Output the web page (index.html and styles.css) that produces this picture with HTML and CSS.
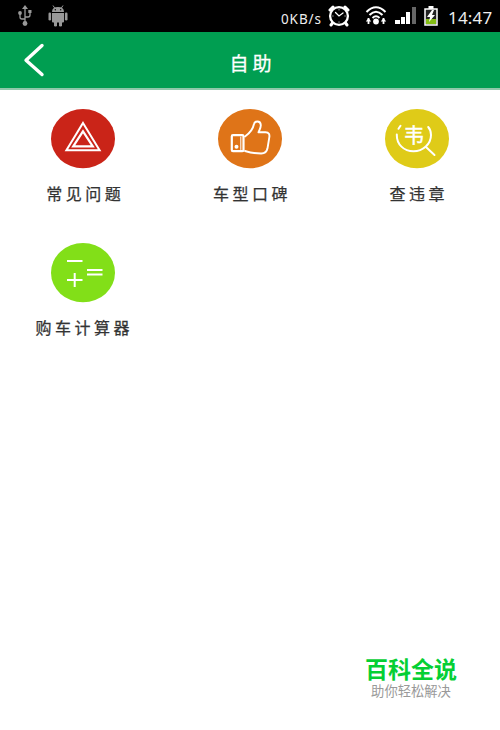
FILE: index.html
```html
<!DOCTYPE html>
<html lang="zh-CN">
<head>
<meta charset="utf-8">
<title>自助</title>
<link rel="stylesheet" href="styles.css">
</head>
<body>
<div class="screen">
  <div class="status">
    <svg class="usb" width="14" height="22" viewBox="0 0 14 22" fill="none" stroke="#999" stroke-width="1.300">
      <path d="M7 3V18M2 8v4q0 2 2 2h3M12 6.500v3.500q0 2-2 2H7"/>
      <g fill="#999" stroke="none"><path d="M7 0l3 4H4z"/><circle cx="7" cy="18.500" r="2.400"/><circle cx="2" cy="8" r="1.900"/><path d="M10.300 5h3.200v3h-3.200z"/></g>
    </svg>
    <svg class="robot" width="20" height="22" viewBox="0 0 20 22" fill="#999">
      <path d="M4 7q0-5 6-5t6 5zM4 8h12v8.500q0 1-1 1H5q-1 0-1-1z"/>
      <rect x="0.500" y="7.500" width="2.600" height="8" rx="1.300"/><rect x="16.900" y="7.500" width="2.600" height="8" rx="1.300"/>
      <rect x="6" y="15" width="3" height="6.500" rx="1.300"/><rect x="11" y="15" width="3" height="6.500" rx="1.300"/>
      <path d="M5 .5l2 3M15 .5l-2 3" stroke="#999"/><circle cx="7.300" cy="4.800" r=".7" fill="#000"/><circle cx="12.700" cy="4.800" r=".7" fill="#000"/>
    </svg>
    <span class="speed">0KB/s</span>
    <svg class="alarm" width="22" height="22" viewBox="0 0 22 22" fill="none" stroke="#fff" stroke-linecap="round">
      <path d="M2 5l3-3M20 5l-3-3M4.500 18L3 20M17.500 18l1.500 2" stroke-width="3"/>
      <circle cx="11" cy="11" r="8.900" fill="#000" stroke-width="2.300"/>
      <path d="M7.500 7.500L11 11l4-3" stroke-width="1.300"/>
      <path d="M11 4.800v.1M17 11h.1M11 17v.1M5 11h-.1" stroke-width="1"/>
    </svg>
    <svg class="wifi" width="22" height="20" viewBox="0 0 22 20" fill="none" stroke="#fff" stroke-width="2">
      <path d="M1.500 6Q11-3.500 20.500 6M4.500 9Q11 2.500 17.500 9M7.500 12Q11 8.500 14.500 12"/>
      <circle cx="11" cy="15.500" r="2.900" fill="#fff" stroke="none"/>
      <path d="M3.500 12v6M18.500 12v6" stroke-width="1.800"/><path d="M.8 15.500h5.400l-2.700-3.500zM15.800 15.500h5.400l-2.700-3.500z" fill="#fff" stroke="none"/>
    </svg>
    <svg class="signal" width="22" height="18" viewBox="0 0 22 18" fill="#fff">
      <path d="M0 13h5v4H0zM6 10h4v7H6zM11 5h4v12h-4z"/><path d="M17 0h4v17h-4z" fill="#666"/>
    </svg>
    <svg class="battery" width="14" height="20" viewBox="0 0 14 20">
      <path d="M4.500 0h5v3h-5z" fill="#fff"/><path d="M1 3h12v16H1z" fill="#222" stroke="#fff" stroke-width="1.500"/>
      <path d="M2 13h10v5H2z" fill="#83bd14"/><path d="M8 4l-5 7h3l-1 5 6-7H8l2-5z" fill="#fff"/>
    </svg>
    <span class="clock">14:47</span>
  </div>
  <header class="bar">
    <svg class="back" width="22" height="34" viewBox="0 0 22 34" fill="none" stroke="#fff" stroke-width="3.400" stroke-linecap="round" stroke-linejoin="round"><path d="M19 2.500L3 17.200 19 31.500"/></svg>
    <h1 class="title">自助</h1>
  </header>
  <main class="grid">
    <div class="item">
      <svg width="64" height="60" viewBox="0 0 64 60" fill="none" stroke="#fff" stroke-linejoin="miter">
        <ellipse cx="32" cy="29.700" rx="32" ry="29.600" fill="#ca2418" stroke="none"/>
        <path d="M32 14L48.600 41.200H15.400z" stroke-width="2"/><path d="M32 22.300L41.800 37.300H22.200z" stroke-width="2.200"/>
      </svg>
      <span class="label">常见问题</span>
    </div>
    <div class="item">
      <svg width="64" height="60" viewBox="0 0 64 60" fill="none" stroke="#fff" stroke-width="1.900" stroke-linejoin="round" stroke-linecap="round">
        <ellipse cx="32" cy="29.700" rx="32" ry="29.600" fill="#df7418" stroke="none"/>
        <path d="M27 27.500C32 24 35 20 36 15c.4-3 6.500-4 6.800 1 .2 3-1.500 5-2.300 7.300h7c3.500 0 4.300 2.500 3.800 5l-1.800 11c-.8 4-3 5.300-6.500 5.200-5.500 0-10.500-.8-16-2.500"/>
        <rect x="13.800" y="26.200" width="11.700" height="16" rx="1.200" stroke-width="2.200"/><path d="M22.800 28v12.500" stroke-width="1"/><circle cx="18.500" cy="37.800" r="2" fill="#fff" stroke="none"/>
      </svg>
      <span class="label">车型口碑</span>
    </div>
    <div class="item">
      <svg width="64" height="60" viewBox="0 0 64 60" fill="none" stroke="#fff" stroke-width="2" stroke-linecap="round">
        <ellipse cx="32" cy="29.700" rx="32" ry="29.600" fill="#dfcb18" stroke="none"/>
        <path d="M13.500 19.800l2-3M11.800 25.500C11.500 35.500 19 42.300 28.500 42.300S46 35 46 26c0-3.500-1-6-2.800-8M41.500 38.500l8 7.500"/>
        <text class="mark" x="29" y="34">韦</text>
      </svg>
      <span class="label">查违章</span>
    </div>
    <div class="item">
      <svg width="64" height="60" viewBox="0 0 64 60" fill="none" stroke="#fff" stroke-width="2">
        <ellipse cx="32" cy="29.700" rx="32" ry="29.600" fill="#82df18" stroke="none"/>
        <path d="M16 18h15.500M16 37h15.500M23.700 30v14M36 27h15.500M36 31.500h15.500"/>
      </svg>
      <span class="label label-long">购车计算器</span>
    </div>
  </main>
  <footer class="brand">
    <div class="brand-name">百科全说</div>
    <div class="brand-sub">助你轻松解决</div>
  </footer>
</div>
</body>
</html>
```
FILE: styles.css
```css
* { box-sizing: border-box; }
body { margin: 0; background: #fff; font-family: "Noto Sans CJK SC", sans-serif; }
svg { display: block; flex: none; }
.screen { width: 500px; height: 730px; display: flex; flex-direction: column; overflow: hidden; }
.status { height: 32px; background: #000; display: flex; align-items: center; padding-left: 18px; flex: none; }
.robot { margin-left: 16px; }
.speed { width: 42px; margin-left: 213px; color: #eee; font: 13.500px/20px "Noto Sans", sans-serif; letter-spacing: 0.900px; white-space: nowrap; padding-top: 5px; }
.alarm { margin-left: 5px; }
.wifi { margin-left: 15px; }
.signal { margin-left: 8px; }
.battery { margin-left: 7px; }
.clock { margin-left: 10px; padding-top: 3px; color: #eee; font: 17px/24px "Noto Sans", sans-serif; letter-spacing: 0.200px; white-space: nowrap; }
.bar { height: 58px; background: #009e51; border-bottom: 2px solid #8fc9aa; display: grid; grid-template-columns: 60px 1fr 60px; align-items: center; flex: none; }
.back { margin-left: 23px; }
.title { margin: 6px 0 0 5px; text-align: center; color: #fff; font-size: 19px; line-height: 26px; font-weight: 400; letter-spacing: 4px; -webkit-text-stroke: 0.3px #fff; }
.grid { display: grid; grid-template-columns: repeat(3, 1fr); grid-auto-rows: 133.5px; padding-top: 19px; flex: 1; align-content: start; }
.item { display: flex; flex-direction: column; align-items: center; }
.label { margin-top: 13px; color: #333; font-size: 16px; line-height: 22px; letter-spacing: 3.500px; padding-left: 4px; -webkit-text-stroke: 0.25px #333; }
.label-long { padding-left: 2px; }
.mark { fill: #fff; stroke: #fff; stroke-width: 0.4px; font-size: 20.500px; text-anchor: middle; }
.brand { width: 178px; height: 77px; align-self: flex-end; text-align: center; flex: none; }
.brand-name { color: #05cf34; font-size: 23px; line-height: 34px; margin-top: -2px; font-weight: 700; }
.brand-sub { color: #999; font-size: 13.300px; line-height: 20px; margin-top: -4px; }
```
